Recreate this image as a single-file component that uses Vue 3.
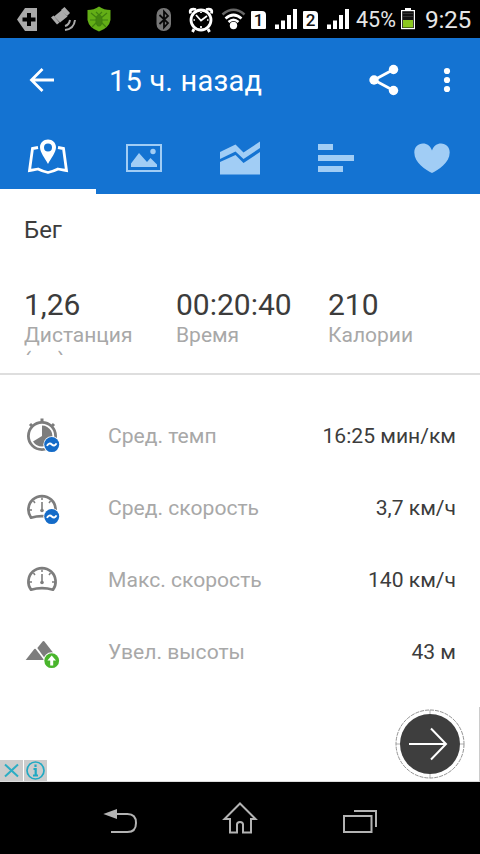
<script setup>
const stats = [
  { value: '1,26', label: 'Дистанция (км)', cls: 'distance' },
  { value: '00:20:40', label: 'Время', cls: 'time' },
  { value: '210', label: 'Калории', cls: 'calories' },
]
const rows = [
  { icon: 'pace', label: 'Сред. темп', value: '16:25 мин/км' },
  { icon: 'avg', label: 'Сред. скорость', value: '3,7 км/ч' },
  { icon: 'max', label: 'Макс. скорость', value: '140 км/ч' },
  { icon: 'climb', label: 'Увел. высоты', value: '43 м' },
]
const sims = ['1', '2']
</script>

<template>
  <div class="screen">
    <div class="status">
      <svg class="notices" width="96" height="38" viewBox="16 0 96 38">
        <path d="M37 8V31H25L17 19.500L25 8Z" fill="#a9a9a9" />
        <path d="M29 13V26M22.500 19.500H35.500" stroke="#000" stroke-width="4" />
        <g fill="#aaa">
          <path d="M54 16.500L62 10L67.500 16.500L60 22.500Z" />
          <path d="M51 17.500L53.500 15.500L59.500 22.500L57 24.500Z" />
          <path d="M61 10L64.500 7L70 13L67 16Z" />
        </g>
        <path d="M65 26Q69 25 70 20M65 30Q74 29 75 20" fill="none" stroke="#aaa" stroke-width="2" />
        <path d="M99 6.500Q104 10 110.500 10V20Q109 28 99 31.500Q89 28 87.500 20V10Q94 10 99 6.500Z" fill="#63ae16" />
        <g fill="none" stroke="#3f8010" stroke-width="1.200">
          <ellipse cx="99" cy="20.500" rx="3" ry="5.500" fill="#43850e" />
          <path d="M96 12L99 15L102 12M91 13L97 18M107 13L101 18M90 20H96M108 20H102M92 27L97 22M106 27L101 22" />
        </g>
      </svg>
      <svg class="system" width="94" height="38" viewBox="154 0 94 38">
        <rect x="156.500" y="8" width="14.500" height="23" rx="7" fill="#777" />
        <path d="M159.500 15L168 23L164 27.500V11.500L168 16L159.500 24" fill="none" stroke="#080808" stroke-width="1.800" />
        <circle cx="201" cy="20" r="10" fill="none" stroke="#fff" stroke-width="2.800" />
        <path d="M190.500 13.500Q189 8 196 9.500M206 9.500Q213 8 211.500 13.500M194 29L192.500 32M208 29L209.500 32" fill="none" stroke="#fff" stroke-width="2.800" />
        <path d="M196 15L201 20.500L207 16M201 12V13M193.500 20H195M207 20H208.500M201 26V28" fill="none" stroke="#fff" stroke-width="1.700" />
        <path d="M222.500 14.500Q233.500 5 244.500 14.500" fill="none" stroke="#666" stroke-width="2.500" />
        <path d="M225.500 18.500Q233.500 11.500 241.500 18.500" fill="none" stroke="#fff" stroke-width="2.700" />
        <path d="M228.500 22Q233.500 17.500 238.500 22" fill="none" stroke="#fff" stroke-width="2.500" />
        <circle cx="233.500" cy="25.500" r="3.700" fill="#fff" />
      </svg>
      <div v-for="s in sims" :key="s" class="sim">
        <span class="card">{{ s }}</span>
        <svg width="22" height="20" viewBox="0 0 22 20">
          <path d="M0 15.500H4V20H0ZM6 11.500H10V20H6ZM12 6H16V20H12ZM18 0H22V20H18Z" fill="#fff" />
        </svg>
      </div>
      <span class="percent">45%</span>
      <svg class="battery" width="14" height="22" viewBox="0 0 14 22">
        <path d="M4 0H10V2H4Z" fill="#fff" />
        <rect x=".6" y="2.600" width="12.800" height="18" fill="#111" stroke="#fff" stroke-width="1.200" />
        <path d="M2 5.500H12M2 8.500H12" stroke="#333" />
        <path d="M2 12H12V19.500H2Z" fill="#8cc820" />
      </svg>
      <span class="clock">9:25</span>
    </div>

    <header class="header">
      <div class="bar">
        <svg class="back" width="26" height="26" viewBox="0 0 26 26">
          <path d="M13.500 2L2.500 13L13.500 24M2.500 13H25" fill="none" stroke="#fff" stroke-width="2.800" />
        </svg>
        <h1 class="title">15 ч. назад</h1>
        <svg class="share" width="30" height="32" viewBox="0 0 30 32">
          <path d="M24.500 5.500L5 16L24.500 26.500" fill="none" stroke="#fff" stroke-width="2.800" />
          <g fill="#fff"><circle cx="24.500" cy="5.500" r="4.700" /><circle cx="5" cy="16" r="4.700" /><circle cx="24.500" cy="26.500" r="4.700" /></g>
        </svg>
        <svg class="more" width="8" height="26" viewBox="0 0 8 26" fill="#fff">
          <circle cx="4" cy="4" r="3.100" /><circle cx="4" cy="13" r="3.100" /><circle cx="4" cy="22" r="3.100" />
        </svg>
      </div>
      <nav class="tabs">
        <div class="tab active">
          <svg width="48" height="48" viewBox="0 0 48 48">
            <path d="M14 13.500L8.500 14.500L5.500 36.500Q9 36 14 35Q19 37.500 24 38.500Q29 37.500 34 35Q39 36 42.500 36.500L39.500 14.500L34 13.500" fill="none" stroke="#fff" stroke-width="2.800" />
            <path fill-rule="evenodd" d="M24 6.500C19.500 6.500 16 9.800 16 14.200C16 19.500 21 25 24 31C27 25 32 19.500 32 14.200C32 9.800 28.500 6.500 24 6.500ZM24 10.500A4 4 0 1 1 24 18.500A4 4 0 1 1 24 10.500Z" transform="translate(0 -1)" fill="#fff" stroke="#1473d2" stroke-width="0" />
          </svg>
        </div>
        <div class="tab">
          <svg width="48" height="48" viewBox="0 0 48 48">
            <rect x="7" y="11" width="34" height="26" fill="none" stroke="#a1cdf5" stroke-width="2" />
            <path d="M11 33V29.500L19 19L27 28L30.500 24L37 30.500V33Z" fill="#a1cdf5" />
            <circle cx="33" cy="17.500" r="2.700" fill="#a1cdf5" />
          </svg>
        </div>
        <div class="tab">
          <svg width="48" height="48" viewBox="0 0 48 48" fill="#a1cdf5">
            <path d="M4 18L19.500 10.500L27.500 18.500L44 7.500V14L27.500 25L19.500 17.500L4 25Z" />
            <path d="M4 28L19.500 21L27.500 29L44 18V40.500H4Z" />
          </svg>
        </div>
        <div class="tab">
          <svg width="48" height="48" viewBox="0 0 48 48" fill="#a1cdf5">
            <path d="M6 10H21V16H6ZM6 21H42V27H6ZM6 32H31V38H6Z" />
          </svg>
        </div>
        <div class="tab">
          <svg width="48" height="48" viewBox="0 0 48 48" fill="#a1cdf5">
            <path d="M24 39C18 36 6.300 29 6.300 18.500C6.300 13 10 9.500 15 9.500C19 9.500 22.500 12 24 16.500C25.500 12 29 9.500 33 9.500C38 9.500 41.700 13 41.700 18.500C41.700 29 30 36 24 39Z" />
          </svg>
        </div>
      </nav>
    </header>

    <main class="body">
      <h2 class="sport">Бег</h2>
      <div class="stats">
        <div v-for="s in stats" :key="s.cls" class="stat">
          <div class="num">{{ s.value }}</div>
          <div class="cap">{{ s.label }}</div>
        </div>
      </div>
      <div class="rows">
        <div v-for="r in rows" :key="r.icon" class="row">
          <svg width="36" height="36" viewBox="0 0 36 36">
            <g v-if="r.icon === 'pace'" transform="translate(0 -1)">
              <circle cx="18" cy="19" r="13.600" fill="none" stroke="#7d7d7d" stroke-width="2.800" />
              <path d="M18 1.500V6M6 7L8.500 9.500M30 7L27.500 9.500" stroke="#7d7d7d" stroke-width="3" />
              <path d="M18 19V8.500A10.500 10.500 0 1 1 9 24.500Z" fill="#7d7d7d" />
            </g>
            <template v-if="r.icon === 'avg' || r.icon === 'max'">
              <path d="M7 27.700A13.600 13.600 0 1 1 29 27.700Q18 24.700 7 27.700Z" fill="none" stroke="#7d7d7d" stroke-width="2.700" stroke-linejoin="round" />
              <path d="M18 7.500V10M9.500 11L11 13M26.500 11L25 13M5 20H8M31 20H28" stroke="#7d7d7d" stroke-width="1.500" />
              <path d="M18 12V20.500" stroke="#7d7d7d" stroke-width="1.600" />
              <circle cx="18" cy="20.500" r="1.800" fill="#7d7d7d" />
            </template>
            <template v-if="r.icon === 'pace' || r.icon === 'avg'">
              <circle cx="27.700" cy="26.600" r="8.400" fill="#fff" />
              <circle cx="27.700" cy="26.600" r="7.500" fill="#146bc8" />
              <path d="M23 27.900C24.200 25.400 26.200 24.900 27.800 26.400S31.200 27.900 32.500 25.400" fill="none" stroke="#fff" stroke-width="2" />
            </template>
            <template v-if="r.icon === 'climb'">
              <path d="M1.700 26L10.300 15Q11 14.300 11.700 15L20 26Z" fill="#7d7d7d" />
              <path d="M13.300 14L18.800 7.300Q19.500 6.600 20.200 7.300L29 18.500V26H22Z" fill="#7d7d7d" />
              <circle cx="27.700" cy="26.700" r="8.400" fill="#fff" />
              <circle cx="27.700" cy="26.700" r="7.400" fill="#49b52c" />
              <path d="M27.700 21.500L32 26.500H29.200V31.500H26.200V26.500H23.400Z" fill="#fff" />
            </template>
          </svg>
          <span class="label">{{ r.label }}</span>
          <span class="value">{{ r.value }}</span>
        </div>
      </div>
    </main>

    <section class="ad">
      <div class="choices">
        <svg width="23" height="21" viewBox="0 .5 23 21"><path d="M5 5L18 17M18 5L5 17" stroke="#2badc4" stroke-width="2" /></svg>
        <svg width="23" height="21" viewBox="0 .5 23 21">
          <circle cx="11.500" cy="11" r="8.500" fill="none" stroke="#20a9c3" stroke-width="1.700" />
          <path d="M11.500 5V7.500M9.500 9.500H11.700V16M9 16H14" fill="none" stroke="#20a9c3" stroke-width="2.200" />
        </svg>
      </div>
      <svg class="go" width="70" height="70" viewBox="0 0 70 70">
        <circle cx="35" cy="35" r="34" fill="none" stroke="#777" stroke-width=".8" stroke-dasharray="4 1" />
        <path d="M35 1V6M35 64V69M1 35H6M64 35H69" stroke="#999" stroke-width=".8" />
        <circle cx="35" cy="35" r="30" fill="#3e3e3e" />
        <path d="M14 35H50M36 19.500L51 35L36 50.500" fill="none" stroke="#fff" stroke-width="2" />
      </svg>
    </section>

    <footer class="navbar">
      <svg width="36" height="36" viewBox="0 0 36 36">
        <path d="M14 13H25.500Q34 13 34 22T25.500 31H9" fill="none" stroke="#b3b3b3" stroke-width="2" />
        <path d="M1.300 13L15 8V18Z" fill="#b3b3b3" />
      </svg>
      <svg width="36" height="36" viewBox="0 0 36 36">
        <path d="M18 2.500L33.500 18H29V31.500H21V23.500Q21 21 18 21T15 23.500V31.500H8V18H2.500Z" fill="none" stroke="#b3b3b3" stroke-width="2" />
      </svg>
      <svg width="36" height="36" viewBox="0 0 36 36">
        <path d="M2 15H29.500V31H2ZM12 10H34V26" fill="none" stroke="#b3b3b3" stroke-width="2" />
      </svg>
    </footer>
  </div>
</template>

<style>
body { margin: 0; background: #fff; }
</style>

<style scoped>
.screen { width: 480px; height: 854px; display: flex; flex-direction: column; overflow: hidden; background: #fff; font-family: Roboto, "Noto Sans", sans-serif; color: #3c3c3c; }
svg { display: block; flex: none; }
.status { height: 38px; flex: none; background: #000; display: flex; color: #e6e6e6; }
.notices { margin-left: 16px; }
.system { margin-left: 42px; }
.sim { display: flex; gap: 9px; margin: 9px 6px 0 3px; width: 46px; }
.sim + .sim { margin-left: 0; }
.card { width: 15px; height: 18px; margin-top: 2px; background: #fff; color: #111; font-size: 17px; font-weight: 500; line-height: 18px; text-align: center; border-radius: 1px 4px 1px 1px; }
.percent { width: 45px; margin-left: 1px; font-size: 21.5px; line-height: 40px; }
.battery { margin-top: 8px; }
.clock { margin-left: 10px; font-size: 24.5px; line-height: 40px; letter-spacing: -0.3px; white-space: nowrap; }
.header { background: #1473d2; color: #fff; flex: none; height: 156px; }
.bar { height: 84px; display: flex; align-items: center; }
.back { margin-left: 29px; }
.title { margin: 0 0 0 54px; padding-top: 2px; width: 260px; font-size: 29px; font-weight: 400; line-height: 40px; letter-spacing: 0.2px; }
.more { margin-left: 44px; }
.tabs { display: flex; height: 72px; }
.tab { width: 96px; height: 72px; display: flex; justify-content: center; padding-top: 12px; box-sizing: border-box; }
.active { border-bottom: 5px solid #fff; }
.body { height: 513px; flex: none; }
.sport { margin: 0; padding: 22px 24px 0; font-size: 24px; line-height: 28px; font-weight: 400; }
.stats { height: 86px; padding: 43px 24px 0; display: flex; border-bottom: 2px solid #dedede; }
.stat { flex: none; width: 152px; height: 68px; overflow: hidden; }
.stat:last-child { width: 128px; }
.num { font-size: 30px; line-height: 36px; }
.cap { width: 120px; color: #a8a8a8; font-size: 21px; line-height: 24.5px; }
.rows { padding: 25px 24px 0; }
.row { height: 72px; display: flex; align-items: center; font-size: 21.1px; }
.label, .value { padding-bottom: 2px; }
.label { margin-left: 48px; color: #a8a8a8; }
.value { margin-left: auto; }
.ad { height: 75px; flex: none; box-sizing: border-box; border-right: 1px solid #ccc; border-bottom: 1px solid #ddd; display: flex; align-items: flex-end; justify-content: space-between; padding-right: 14px; }
.choices { display: flex; gap: 1px; }
.choices svg { background: #ccc; }
.go { margin-bottom: 2px; }
.navbar { height: 72px; flex: none; background: #000; display: flex; justify-content: center; gap: 84px; padding-top: 19px; box-sizing: border-box; }
</style>
